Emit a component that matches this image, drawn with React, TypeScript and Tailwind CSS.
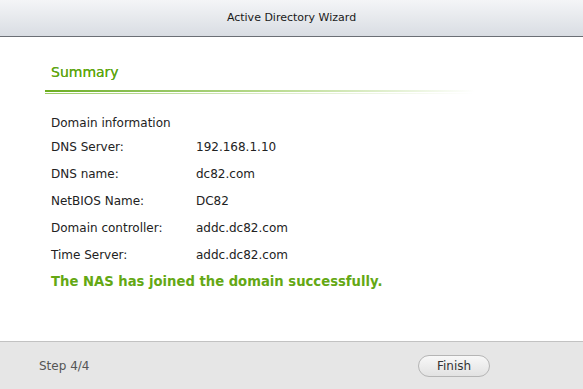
import React from 'react';

const rows: [string, string][] = [
  ['DNS Server:', '192.168.1.10'],
  ['DNS name:', 'dc82.com'],
  ['NetBIOS Name:', 'DC82'],
  ['Domain controller:', 'addc.dc82.com'],
  ['Time Server:', 'addc.dc82.com'],
];

export default function App() {
  return (
    <div className="w-[583px] h-[389px] flex flex-col bg-white font-['DejaVu_Sans',sans-serif] overflow-hidden">
      <div className="h-[37px] shrink-0 flex items-center justify-center bg-gradient-to-b from-[#f4f5f7] to-[#d9dde3] border-b border-[#6b6f75] text-[11px] text-[#1a1a1a]">
        Active Directory Wizard
      </div>
      <div className="flex-1 pl-[51px] pt-[26px]">
        <div className="text-[14px] text-[#5ea512] leading-[18px] [text-shadow:0_0_0.4px_#5ea512]">Summary</div>
        <div className="mt-[9px] -ml-[6px] w-[430px]">
          <div className="h-[2px] bg-gradient-to-r from-[#6cae1e] via-[#b6d98a] to-transparent" />
          <div className="h-[1px] mt-[1px] bg-gradient-to-r from-[#9bca62] via-[#d8eac2] to-transparent" />
        </div>
        <div className="mt-[21px] text-[12px] text-[#222] leading-[16px]">Domain information</div>
        <div className="mt-[8px] flex flex-col gap-[11px]">
          {rows.map(([k, v]) => (
            <div key={k} className="flex text-[12px] leading-[16px] text-[#222]">
              <div className="w-[145px]">{k}</div>
              <div>{v}</div>
            </div>
          ))}
        </div>
        <div className="mt-[10px] text-[13.2px] font-bold text-[#64a814] leading-[18px]">
          The NAS has joined the domain successfully.
        </div>
      </div>
      <div className="h-[48px] shrink-0 flex items-center justify-between bg-[#e6e6e6] border-t border-[#c2c2c2] pl-[39px] pr-[93px]">
        <span className="text-[12px] text-[#555]">Step 4/4</span>
        <button className="w-[72px] h-[22px] rounded-full border border-[#b5b5b5] bg-gradient-to-b from-[#f8f8f8] to-[#e2e2e2] text-[12px] text-[#333]">
          Finish
        </button>
      </div>
    </div>
  );
}
